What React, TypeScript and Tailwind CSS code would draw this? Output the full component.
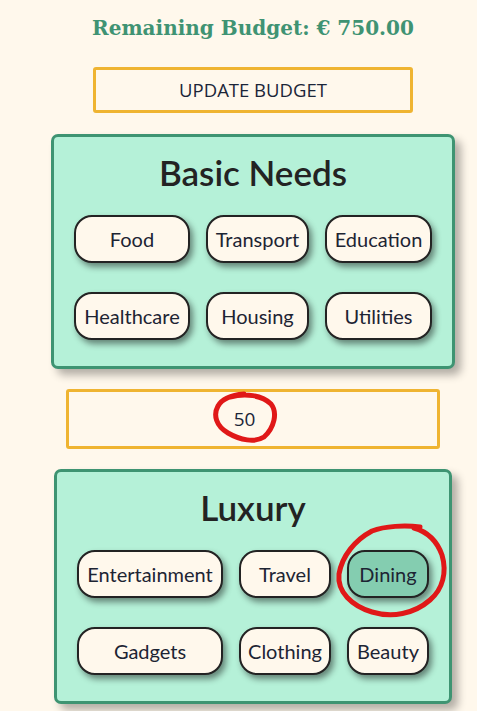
import React from "react";

const pill =
  "h-[48px] rounded-[18px] border-2 border-[#232323] flex items-center justify-center text-[20px] text-[#1d2433] shadow-[3px_4px_6px_rgba(0,0,0,0.45)] font-['Lato',sans-serif] whitespace-nowrap";

function Card({
  title,
  cols,
  items,
  selected,
}: {
  title: string;
  cols: string;
  items: string[];
  selected?: string;
}) {
  return (
    <div className="rounded-[7px] border-[3px] border-[#3e9472] bg-[#b5f1d8] pt-[15px] pb-[26px] px-[20px] shadow-[6px_6px_9px_rgba(0,0,0,0.3)]">
      <h3 className="text-center text-[35px] leading-[40px] font-semibold text-[#232323] font-['Lato',sans-serif]">
        {title}
      </h3>
      <div className={`mt-[23px] grid ${cols} gap-x-[16px] gap-y-[29px]`}>
        {items.map((it) => (
          <div
            key={it}
            className={`${pill} ${it === selected ? "bg-[#84cdb0]" : "bg-[#fff8ec]"}`}
          >
            {it}
          </div>
        ))}
      </div>
    </div>
  );
}

export default function App() {
  return (
    <div className="relative min-h-[711px] w-full overflow-hidden bg-[#fff8ec]">
      <div className="w-[506px] flex flex-col items-center pt-[14px]">
        <h2 className="text-[20px] leading-[28px] font-bold text-[#3f9373] font-['DejaVu_Serif',serif]">
          Remaining Budget: € 750.00
        </h2>
        <button className="mt-[25px] w-[320px] h-[46px] border-[3px] border-[#efb431] rounded-[3px] bg-[#fff8ec] text-[18.5px] text-[#1b2538] font-['Open_Sans',sans-serif]">
          UPDATE BUDGET
        </button>
        <div className="mt-[21px]">
          <Card
            title="Basic Needs"
            cols="grid-cols-[116px_103px_107px]"
            items={["Food", "Transport", "Education", "Healthcare", "Housing", "Utilities"]}
          />
        </div>
        <div className="mt-[20px] w-[374px] h-[60px] border-[3px] border-[#efb431] rounded-[3px] bg-[#fff8ec] flex items-center justify-center pr-[17px] text-[19px] text-[#1b2538] font-['Open_Sans',sans-serif]">
          50
        </div>
        <div className="mt-[20px]">
          <Card
            title="Luxury"
            cols="grid-cols-[146px_92px_82px]"
            items={["Entertainment", "Travel", "Dining", "Gadgets", "Clothing", "Beauty"]}
            selected="Dining"
          />
        </div>
      </div>
      <svg
        className="absolute left-0 top-0 pointer-events-none"
        width="477"
        height="711"
        viewBox="0 0 477 711"
      >
        <path
          d="M230 397 C245 393 262 395 271 404 C278 413 274 428 264 437 C255 443 240 440 228 433 C216 426 213 415 218 406 C222 399 232 395 244 394"
          fill="none"
          stroke="#e01818"
          strokeWidth="5"
          strokeLinecap="round"
        />
        <path
          d="M420 527 C405 525 385 526 372 531 C355 540 342 556 339 574 C337 592 352 606 372 612 C392 618 414 614 430 600 C443 589 447 572 442 555 C437 541 428 532 414 528"
          fill="none"
          stroke="#e01818"
          strokeWidth="5"
          strokeLinecap="round"
        />
      </svg>
    </div>
  );
}
